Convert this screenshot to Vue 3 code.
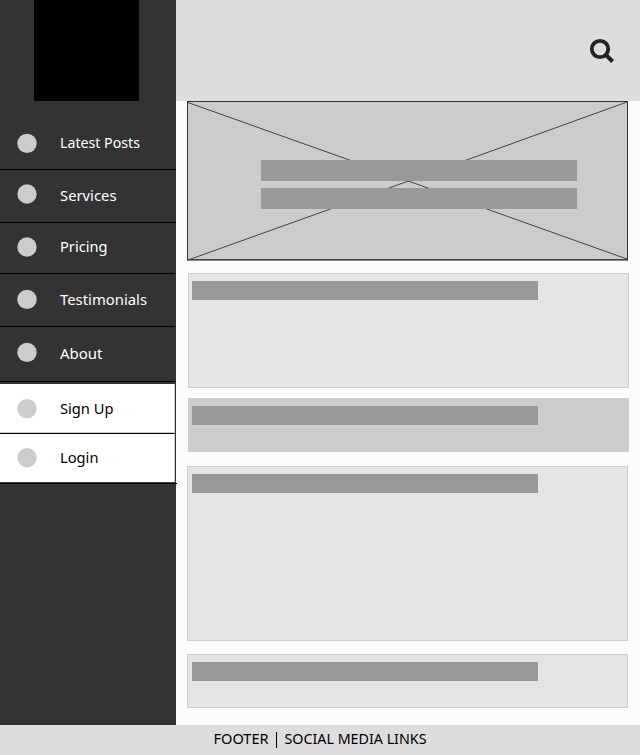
<script setup>
const items = [
  { label: 'Latest Posts', height: 69, dot: 42.4, base: 47, width: 80, full: true },
  { label: 'Services', height: 53, dot: 24, base: 31, width: 56.5, full: true },
  { label: 'Pricing', height: 51, dot: 24, base: 29, width: 47.5 },
  { label: 'Testimonials', height: 53, dot: 25.4, base: 31, width: 87 },
  { label: 'About', height: 55, dot: 25.4, base: 32, width: 42.5 },
]
const account = [
  { label: 'Sign Up', height: 50, dot: 24.6, base: 30, width: 53.5 },
  { label: 'Login', height: 50, dot: 23.7, base: 29, width: 38.5 },
]
const cards = ['first', 'solid', 'tall', 'last']
</script>

<template>
  <div class="page">
    <div class="body">
      <aside class="sidebar">
        <div class="logo"></div>
        <nav>
          <a v-for="i in items" :key="i.label" class="item" :class="{ full: i.full }" :style="{ height: i.height + 'px' }">
            <svg width="175" :height="i.height - 1">
              <circle cx="27" :cy="i.dot" r="9.7" fill="#ccc" />
              <text x="60" :y="i.base" :textLength="i.width" lengthAdjust="spacingAndGlyphs" fill="#fff">{{ i.label }}</text>
            </svg>
          </a>
        </nav>
        <nav class="account">
          <a v-for="i in account" :key="i.label" class="item light" :style="{ height: i.height + 'px' }">
            <svg width="174" :height="i.height - 2">
              <circle cx="27" :cy="i.dot" r="9.7" fill="#ccc" />
              <text x="60" :y="i.base" :textLength="i.width" lengthAdjust="spacingAndGlyphs" fill="#000">{{ i.label }}</text>
            </svg>
          </a>
        </nav>
      </aside>
      <div class="main">
        <header class="header">
          <svg width="28" height="28" viewBox="0 0 28 28" fill="none" stroke="#222">
            <circle cx="12" cy="11" r="8.2" stroke-width="3.8" />
            <path d="M17.5 16.5 L24.6 23.5" stroke-width="4" />
          </svg>
        </header>
        <main class="content">
          <section class="hero">
            <svg class="cross" width="439" height="158" viewBox="0 0 439 158" stroke="#444" stroke-width="1">
              <path d="M0 .5 L439 157 M0 158 L220.5 79 L439 0" fill="none" />
            </svg>
            <div class="strip"></div>
            <div class="strip"></div>
          </section>
          <section v-for="c in cards" :key="c" class="card" :class="c"><div class="bar"></div></section>
        </main>
      </div>
    </div>
    <footer class="footer">
      <svg width="640" height="30">
        <text x="213.5" y="19" textLength="55" lengthAdjust="spacingAndGlyphs">FOOTER</text>
        <rect x="276" y="7" width="1" height="16" />
        <text x="284.5" y="19" textLength="142" lengthAdjust="spacingAndGlyphs">SOCIAL MEDIA LINKS</text>
      </svg>
    </footer>
  </div>
</template>

<style>
body { background: #fcfcfc; }
</style>

<style scoped>
.page { width: 640px; height: 755px; display: flex; flex-direction: column; background: #fcfcfc; font-family: "Noto Sans", "Open Sans", sans-serif; font-size: 15px; overflow: hidden; }
svg { display: block; flex: none; }
.body { display: flex; height: 725px; }
.sidebar { width: 176px; flex: none; background: #333; }
.logo { width: 105px; height: 101px; margin-left: 34px; background: #000; }
.item { display: block; box-sizing: border-box; width: 175px; border-bottom: 1px solid #000; }
.item.full { width: 176px; }
.account { width: 177px; margin-top: 2px; }
.light { background: #fff; border-right: 1px solid #ccc; box-shadow: inset 0 -1px #ccc; }
.light:last-child { width: 177px; border-right: 0; box-shadow: none; background: linear-gradient(#444, #444) 0 48px / 176px 1px no-repeat, linear-gradient(90deg, #fff 174px, #ccc 174px, #ccc 175px, #333 175px, #333 176px, #fcfcfc 176px); }
.main { flex: 1; }
.header { height: 101px; box-sizing: border-box; background: #ddd; display: flex; justify-content: flex-end; padding: 38px 24px 0 0; }
.content { padding: 0 0 0 11px; display: flex; flex-direction: column; }
.hero { position: relative; box-sizing: border-box; width: 441px; height: 160px; margin-bottom: 12px; border: 1px solid #333; border-bottom-color: #888; background: #ccc; box-shadow: inset 0 -1px #444; display: flex; flex-direction: column; gap: 7px; padding: 58px 0 0 72.5px; }
.cross { position: absolute; left: 0; top: 0; }
.strip { position: relative; width: 316.5px; height: 21px; background: #999; }
.card { box-sizing: border-box; width: 441px; border: 1px solid #ccc; background: #e4e4e4; padding: 7px 0 0 4px; }
.bar { width: 346px; height: 19px; background: #999; }
.first, .solid { margin-left: 1px; padding-left: 3px; }
.first { height: 115px; margin-bottom: 10px; }
.solid { height: 54px; margin-bottom: 14px; background: #ccc; }
.tall { height: 175px; margin-bottom: 13px; }
.last { height: 54px; }
.footer { height: 30px; background: #ddd; }
</style>
